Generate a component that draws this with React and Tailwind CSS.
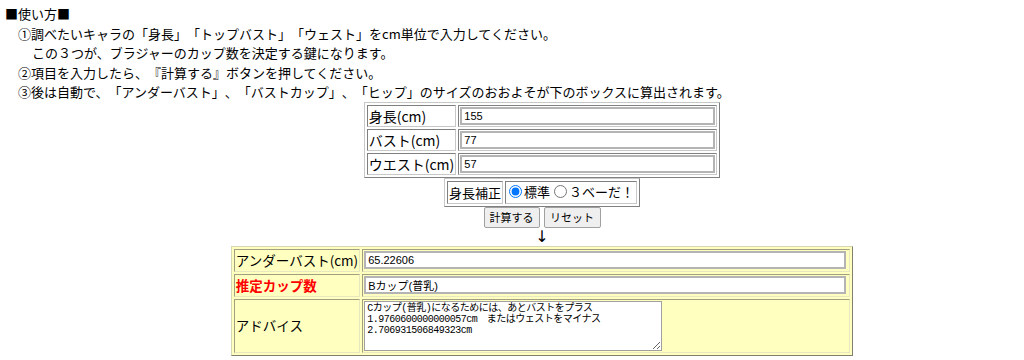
const FONT = { fontFamily: '"Noto Sans CJK JP", "Liberation Sans", sans-serif' };

const INPUT_ROWS = [
  { label: '身長(cm)', value: '155' },
  { label: 'バスト(cm)', value: '77' },
  { label: 'ウエスト(cm)', value: '57' },
];

const ADVICE =
  'Cカップ(普乳)になるためには、あとバストをプラス\n1.9760600000000057cm　またはウェストをマイナス\n2.706931506849323cm';

const CELL = 'border border-t-[#808080] border-l-[#808080] border-b-[#c8c8c8] border-r-[#c8c8c8]';
const YCELL = 'border border-t-[#a0a080] border-l-[#a0a080] border-b-[#e8e8c0] border-r-[#e8e8c0]';

function Field({ value, className = '' }) {
  return (
    <input
      type="text"
      defaultValue={value}
      className={`block h-[18px] px-[2px] text-[11px] leading-[14px] text-black bg-white border-2 border-[#b4b4b4] outline-none ${className}`}
      style={{ fontFamily: '"Liberation Sans", "Noto Sans CJK JP", sans-serif' }}
    />
  );
}

export default function App() {
  return (
    <div className="min-h-screen bg-white text-black [text-spacing-trim:space-all]" style={FONT}>
      {/* How to use */}
      <div className="pt-[4px] pl-[5px] text-[13px] leading-[19.5px]">
        <p>■使い方■</p>
        <p className="pl-[13px]">①調べたいキャラの「身長」「トップバスト」「ウェスト」をcm単位で入力してください。</p>
        <p className="pl-[27px]">この３つが、ブラジャーのカップ数を決定する鍵になります。</p>
        <p className="pl-[13px]">②項目を入力したら、『計算する』ボタンを押してください。</p>
        <p className="pl-[13px]">③後は自動で、「アンダーバスト」、「バストカップ」、「ヒップ」のサイズのおおよそが下のボックスに算出されます。</p>
      </div>

      <div className="flex flex-col items-center pl-[60px] text-[14px]">
        {/* Input table */}
        <table className="border border-t-[#c8c8c8] border-l-[#c8c8c8] border-b-[#808080] border-r-[#808080] border-separate border-spacing-[2px]">
          <tbody>
            {INPUT_ROWS.map((row) => (
              <tr key={row.label}>
                <td className={`w-[86px] h-[21px] p-[1px] ${CELL} leading-[16px] whitespace-nowrap`}>{row.label}</td>
                <td className={`w-[259px] h-[21px] p-[1px] ${CELL}`}>
                  <Field value={row.value} className="w-[255px]" />
                </td>
              </tr>
            ))}
          </tbody>
        </table>

        {/* Height correction */}
        <table className="border border-t-[#c8c8c8] border-l-[#c8c8c8] border-b-[#808080] border-r-[#808080] border-separate border-spacing-[2px] text-[13px]">
          <tbody>
            <tr>
              <td className={`h-[23px] px-[1px] py-0 ${CELL} leading-[17px] whitespace-nowrap`}>身長補正</td>
              <td className={`h-[23px] pl-[1px] pr-[2px] py-0 ${CELL} leading-[17px] whitespace-nowrap`}>
                <label className="inline-flex items-center">
                  <input type="radio" name="hosei" defaultChecked className="w-[13px] h-[13px] ml-[2px] mr-[2px]" />
                  標準
                </label>
                <label className="inline-flex items-center ml-[3px]">
                  <input type="radio" name="hosei" className="w-[13px] h-[13px] ml-[1px] mr-[2px]" />
                  ３ベーだ！
                </label>
              </td>
            </tr>
          </tbody>
        </table>

        {/* Buttons */}
        <div className="flex gap-[4px]">
          <button className="h-[21px] w-[56px] text-[11px] leading-[17px] bg-[#efefef] border border-[#a0a0a0] rounded-[2px]">
            計算する
          </button>
          <button className="h-[21px] w-[57px] text-[11px] leading-[17px] bg-[#efefef] border border-[#a0a0a0] rounded-[2px]">
            リセット
          </button>
        </div>
        <div className="h-[18px] text-[16px] leading-[18px]" style={{ fontFamily: '"DejaVu Sans", sans-serif' }}>
          ↓
        </div>

        {/* Result table */}
        <table className="bg-[#ffffc0] border border-t-[#d8d8b0] border-l-[#d8d8b0] border-b-[#808070] border-r-[#808070] border-separate border-spacing-[2px] text-[13.5px]">
          <tbody>
            <tr>
              <td className={`w-[126px] p-[1px] ${YCELL} leading-[19px] whitespace-nowrap`}>アンダーバスト(cm)</td>
              <td className={`w-[488px] p-[1px] ${YCELL}`}>
                <Field value="65.22606" className="w-[482px]" />
              </td>
            </tr>
            <tr>
              <td className={`p-[1px] ${YCELL} leading-[19px] whitespace-nowrap font-bold text-[#ff0000]`}>推定カップ数</td>
              <td className={`p-[1px] ${YCELL}`}>
                <Field value="Bカップ(普乳)" className="w-[482px]" />
              </td>
            </tr>
            <tr>
              <td className={`h-[54px] p-[1px] ${YCELL} whitespace-nowrap`}>アドバイス</td>
              <td className={`p-[1px] ${YCELL}`}>
                <textarea
                  defaultValue={ADVICE}
                  className="block w-[298px] h-[50px] px-[2px] py-[1px] text-[10px] leading-[11px] tracking-[-0.5px] bg-white border border-[#a0a0a0] outline-none"
                  style={{ fontFamily: '"Liberation Mono", "Noto Sans CJK JP", monospace' }}
                />
              </td>
            </tr>
          </tbody>
        </table>
      </div>
    </div>
  );
}
